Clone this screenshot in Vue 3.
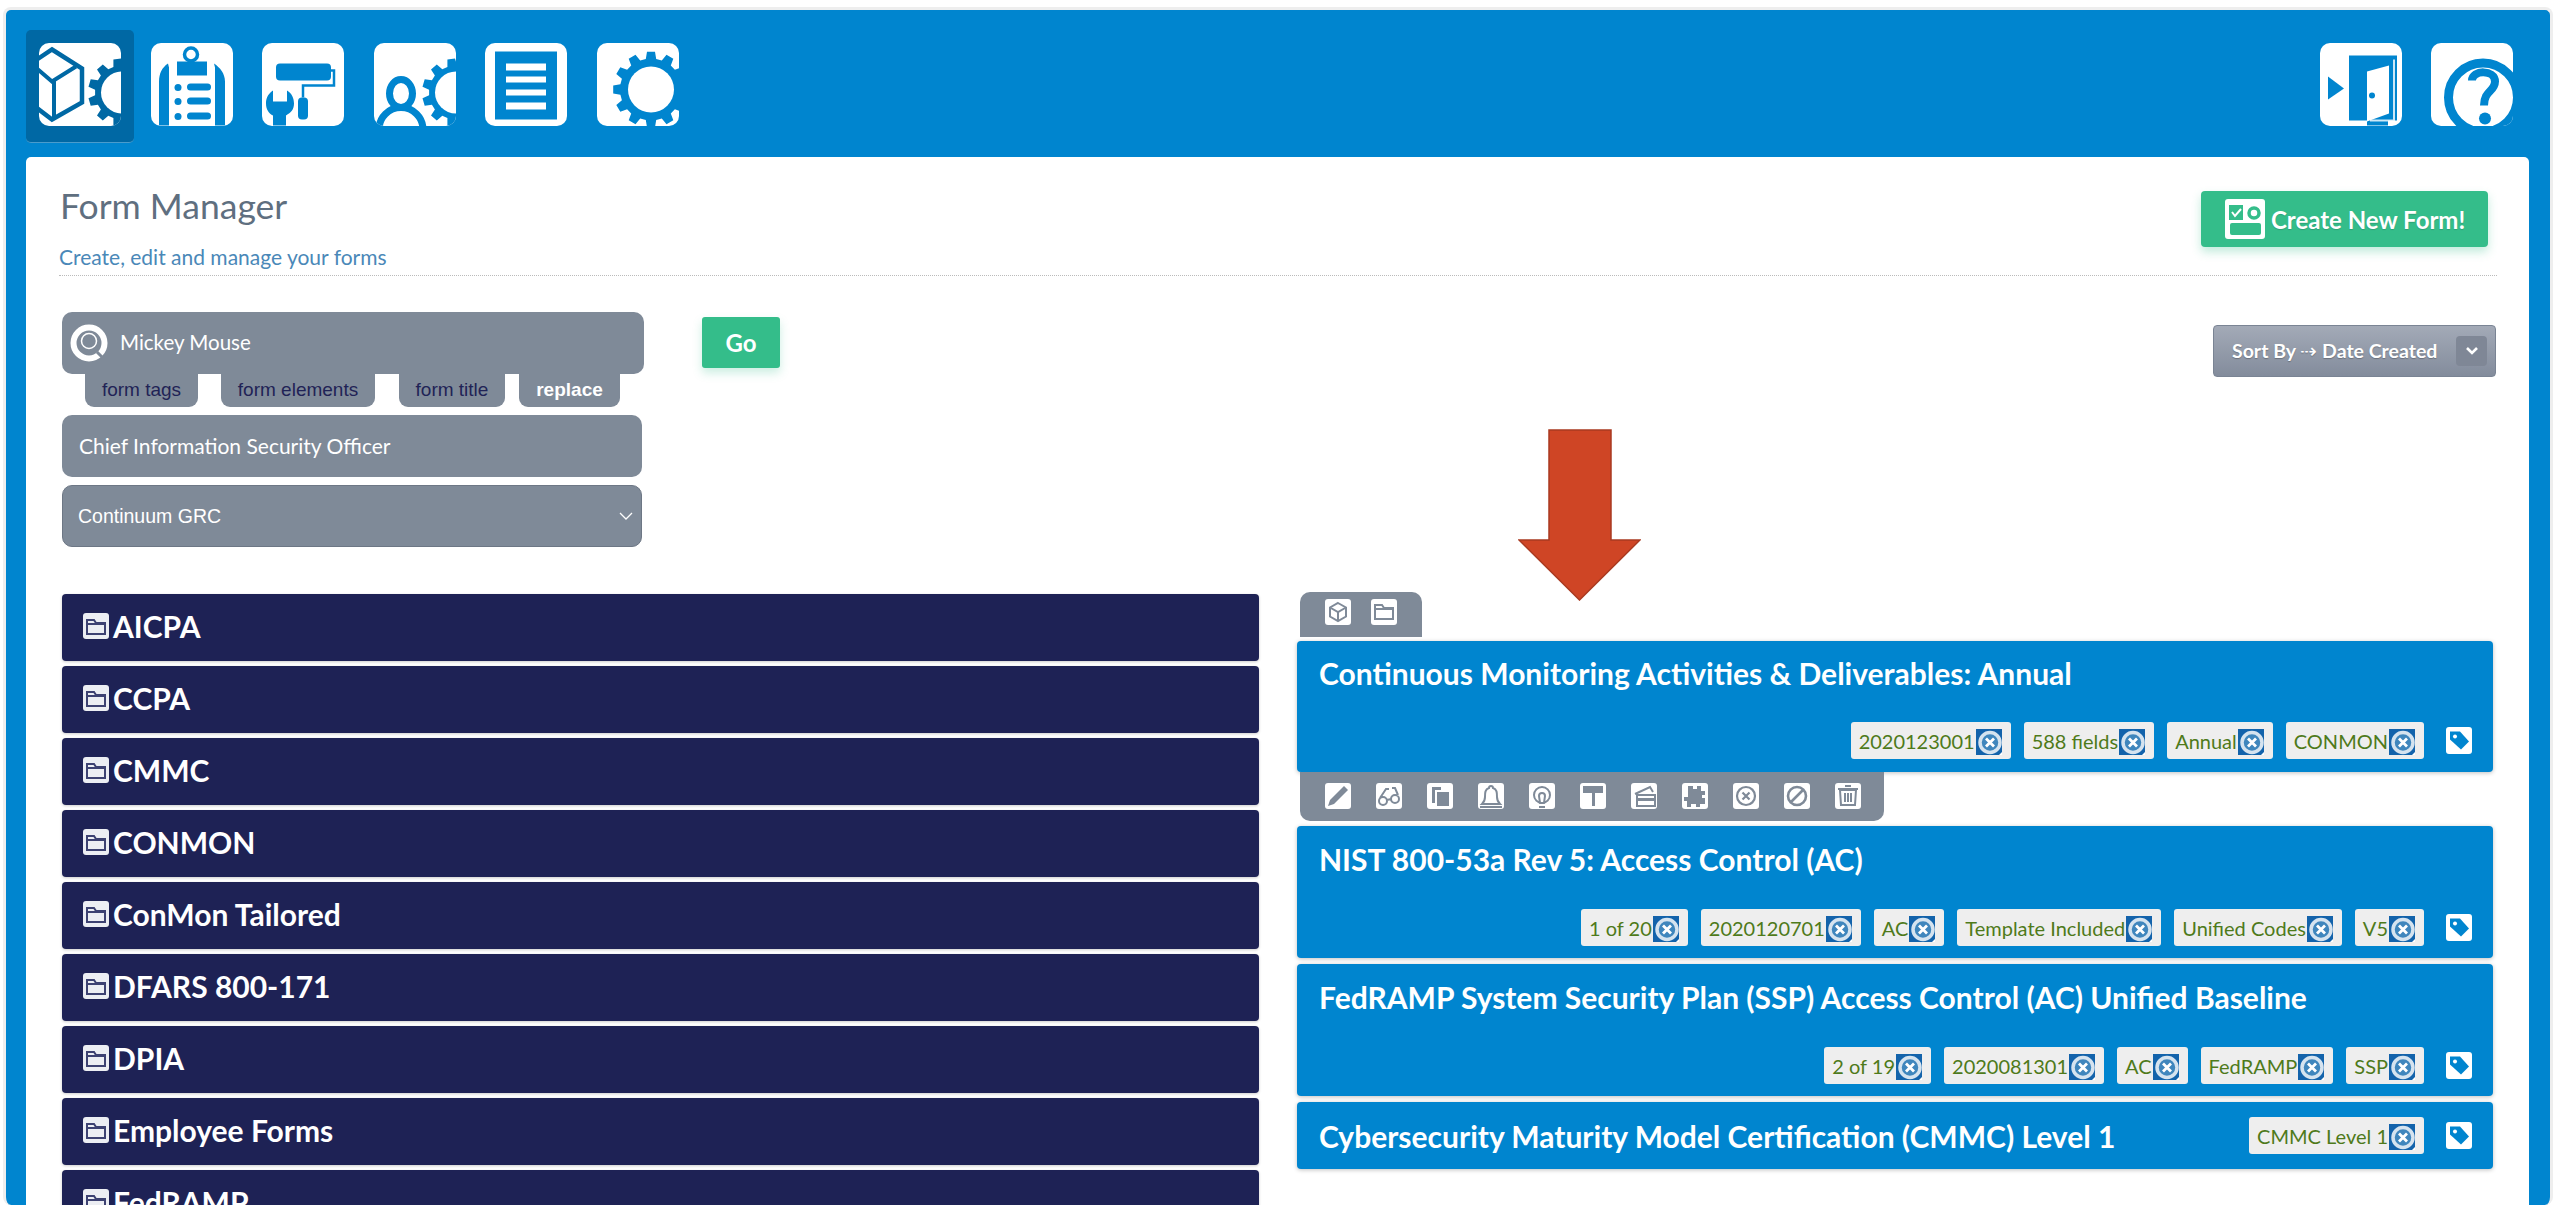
<template>
  <div class="page">
    <div class="frame">
      <header class="topbar">
        <nav class="nav">
          <a class="nav-btn active">
            <svg class="ico-lg" viewBox="0 0 82 82">
              <path d="M13 6 43 25V59L13 76-8 60V20Z" class="ln" stroke-width="4.5" />
              <path d="M-8 20 13 38 37 23M15 38V74" class="ln" stroke-width="4" />
              <path :d="gear(83, 49, 34, 27, 11)" class="fl" />
              <circle cx="83" cy="49" r="21" fill="#fff" />
            </svg>
          </a>
          <a class="nav-btn">
            <svg class="ico-lg" viewBox="0 0 82 82">
              <circle cx="40" cy="11" r="6.5" class="ln" stroke-width="3.5" />
              <rect x="26" y="18" width="30" height="14" class="fl" />
              <path d="M17 20C11 24 8 30 8 38V82H18V24ZM63 20C69 24 74 30 74 38V82H64V24Z" class="fl" />
              <g class="fl">
                <circle cx="27" cy="44" r="3.5" /><rect x="36" y="40" width="24" height="7" rx="3.5" />
                <circle cx="27" cy="58" r="3.5" /><rect x="36" y="54" width="24" height="7" rx="3.5" />
                <circle cx="27" cy="73" r="3.5" /><rect x="36" y="69" width="24" height="7" rx="3.5" />
              </g>
            </svg>
          </a>
          <a class="nav-btn">
            <svg class="ico-lg" viewBox="0 0 82 82">
              <rect x="14" y="20" width="55" height="17" rx="4" class="fl" />
              <path d="M69 27H72V42H41V54" class="ln" stroke-width="2.5" />
              <rect x="36" y="54" width="10" height="22" rx="4" class="fl" />
              <path d="M11 47C5 51 4 56 4 60 4 66 7 70 11 72V82H24V72C29 69 32 66 32 60 32 55 30 50 25 47V58H11Z" class="fl" />
            </svg>
          </a>
          <a class="nav-btn">
            <svg class="ico-lg" viewBox="0 0 82 82">
              <path :d="gear(82, 49, 34, 27, 11)" class="fl" />
              <circle cx="82" cy="49" r="21" fill="#fff" />
              <circle cx="27" cy="86" r="22" class="ln" stroke-width="7" />
              <ellipse cx="27" cy="50" rx="11.5" ry="14" fill="#fff" class="ln2" stroke-width="7" />
            </svg>
          </a>
          <a class="nav-btn">
            <svg class="ico-lg" viewBox="0 0 82 82">
              <rect x="10" y="8" width="62" height="68" class="fl" />
              <g fill="#fff">
                <rect x="21" y="20" width="40" height="7" /><rect x="21" y="33" width="40" height="6" />
                <rect x="21" y="46" width="40" height="6" /><rect x="21" y="59" width="40" height="7" />
              </g>
            </svg>
          </a>
          <a class="nav-btn">
            <svg class="ico-lg" viewBox="0 0 82 82">
              <path :d="gear(54, 46, 38, 31, 12)" class="fl" />
              <circle cx="54" cy="46" r="23" fill="#fff" />
            </svg>
          </a>
        </nav>
        <nav class="nav">
          <a class="nav-btn">
            <svg class="ico-lg" viewBox="0 0 82 82">
              <path d="M8 33 24 45 8 56Z" class="fl" />
              <path d="M29 12H77V77H68V82H47V77H29Z" class="fl" />
              <path d="M47 28 69 22V70L47 78Z" fill="#fff" />
              <path d="M73 16H75V78H50V76H73Z" fill="#fff" opacity=".8" />
              <circle cx="52" cy="52" r="3" class="fl" />
            </svg>
          </a>
          <a class="nav-btn">
            <svg class="ico-lg" viewBox="0 0 82 82">
              <circle cx="52" cy="54" r="34.5" class="ln" stroke-width="9" />
              <path d="M41 37C41 26 64 26 64 38 64 48 53 47 53 62" class="ln" stroke-width="8" />
              <circle cx="54" cy="75" r="6" class="fl" />
            </svg>
          </a>
        </nav>
      </header>

      <main class="panel">
        <div class="head">
          <div>
            <h1>Form Manager</h1>
            <p>Create, edit and manage your forms</p>
          </div>
          <button class="create">
            <svg class="create-ico" viewBox="0 0 40 40">
              <rect x="4" y="6" width="14" height="15" fill="#34bd8a" />
              <path d="M7 13l3 4 6-7" fill="none" stroke="#fff" stroke-width="2" />
              <circle cx="29" cy="14" r="5" fill="none" stroke="#34bd8a" stroke-width="3.5" />
              <rect x="5" y="24" width="31" height="12" rx="2" fill="#34bd8a" />
            </svg>
            <span>Create New Form!</span>
          </button>
        </div>

        <div class="tools">
          <div class="form-side">
            <div class="form-col">
              <div class="field search">
                <svg class="search-ico" viewBox="0 0 40 40">
                  <circle cx="19" cy="20" r="15.5" fill="none" stroke="#fff" stroke-width="6" />
                  <circle cx="19" cy="18" r="7.5" fill="none" stroke="#fff" stroke-width="1.5" />
                  <path d="M27 29l6 6" stroke="#7f8a98" stroke-width="3" />
                </svg>
                <span>Mickey Mouse</span>
              </div>
              <div class="tabs">
                <span v-for="t in searchTabs" :key="t.label" class="tab" :class="{ on: t.on }" :style="{ width: t.w + 'px', marginRight: t.gap + 'px' }">{{ t.label }}</span>
              </div>
              <div class="field plain">Chief Information Security Officer</div>
              <div class="field select">
                <span>Continuum GRC</span>
                <svg class="sel-chev" viewBox="0 0 14 9"><path d="M1 1l6 6 6-6" fill="none" stroke="#fff" stroke-width="1.3" /></svg>
              </div>
            </div>
            <button class="go">Go</button>
          </div>
          <div class="sort">
            <span>Sort By <em>⇢</em> Date Created</span>
            <i class="sort-chev"><svg viewBox="0 0 14 10" width="14" height="10"><path d="M2 2l5 5 5-5" fill="none" stroke="#fff" stroke-width="2.6" /></svg></i>
          </div>
        </div>

        <div class="columns">
          <div class="folders">
            <div v-for="f in folders" :key="f" class="folder">
              <svg class="folder-ico" viewBox="0 0 26 26">
                <path d="M4 7h7l2 3h9v11H4z M4 11h18" fill="none" stroke="#3d4272" stroke-width="2" />
              </svg>
              <span>{{ f }}</span>
            </div>
          </div>

          <div class="forms">
            <div class="strip top">
              <svg v-for="ic in topIcons" :key="ic.name" class="ico-sm" viewBox="0 0 26 26">
                <path v-for="(p, i) in ic.parts" :key="i" :d="p.d" :fill="p.fill ? '#7f8a98' : 'none'" :stroke="p.fill ? 'none' : '#7f8a98'" :stroke-width="p.w || 2" />
              </svg>
            </div>
            <template v-for="(c, idx) in cards" :key="c.title">
              <div class="card" :class="{ compact: c.compact, first: idx === 0 }">
                <h3>{{ c.title }}</h3>
                <div class="chips">
                  <span v-for="chip in c.chips" :key="chip" class="chip">
                    {{ chip }}
                    <svg class="x-ico" viewBox="0 0 26 26">
                      <rect width="26" height="26" fill="#1363ab" />
                      <circle cx="14" cy="13.500" r="10" fill="#3f86bd" stroke="#d5e3ef" stroke-width="3.500" />
                      <path d="M10 9.500l8 8M18 9.500l-8 8" stroke="#fff" stroke-width="2.800" />
                      <path d="M26 26h-3l3-3z" fill="#fff" />
                    </svg>
                  </span>
                  <svg class="tag-ico" viewBox="0 0 26 26">
                    <path d="M4 4h10l9 10-8 8-11-10z" fill="#0085cf" />
                    <circle cx="9" cy="9" r="2" fill="#fff" />
                  </svg>
                </div>
              </div>
              <div v-if="idx === 0" class="strip actions">
                <svg v-for="ic in actionIcons" :key="ic.name" class="ico-sm" viewBox="0 0 26 26">
                  <path v-for="(p, i) in ic.parts" :key="i" :d="p.d" :fill="p.fill ? '#7f8a98' : 'none'" :stroke="p.fill ? 'none' : '#7f8a98'" :stroke-width="p.w || 2" />
                </svg>
              </div>
            </template>
          </div>
        </div>
      </main>
    </div>

    <!-- annotation arrow sits over the page -->
    <svg class="arrow" viewBox="0 0 123 172">
      <path d="M31 1H93V111H122L61.5 171 1 111H31Z" fill="#cf4525" stroke="#a93a20" stroke-width="1.5" />
    </svg>
  </div>
</template>

<script setup>
function gear(cx, cy, R, r, n) {
  let d = ''
  const step = (Math.PI * 2) / n
  for (let i = 0; i < n; i++) {
    const a = i * step
    const pts = [
      [r, a - step * 0.32],
      [R, a - step * 0.2],
      [R, a + step * 0.2],
      [r, a + step * 0.32],
    ]
    for (const [rad, ang] of pts) {
      d += (d ? 'L' : 'M') + (cx + rad * Math.cos(ang)).toFixed(1) + ' ' + (cy + rad * Math.sin(ang)).toFixed(1)
    }
  }
  return d + 'Z'
}

const searchTabs = [
  { label: 'form tags', w: 113, gap: 23 },
  { label: 'form elements', w: 154, gap: 24 },
  { label: 'form title', w: 106, gap: 14 },
  { label: 'replace', w: 101, gap: 0, on: true },
]

const folders = ['AICPA', 'CCPA', 'CMMC', 'CONMON', 'ConMon Tailored', 'DFARS 800-171', 'DPIA', 'Employee Forms', 'FedRAMP']

const topIcons = [
  { name: 'cube', parts: [{ d: 'M13 4l8 4.5v9L13 22l-8-4.500v-9zM5 8.500l8 4.500 8-4.500M13 13v9' }] },
  { name: 'folder', parts: [{ d: 'M4 6h7l2 3h9v11H4zM4 10h18' }] },
]

const actionIcons = [
  { name: 'pencil', parts: [{ d: 'M19 3l4 4L9 21l-6 2 2-6z', fill: true }] },
  { name: 'glasses', parts: [{ d: 'M11 18a4 4 0 1 1-8 0 4 4 0 0 1 8 0zM23 16a4 4 0 1 1-8 0 4 4 0 0 1 8 0zM11 17l4-1M4 15l6-9h3M22 12l-3-7h-3' }] },
  { name: 'copy', parts: [{ d: 'M5 4h9v3H8v13H5z', fill: true }, { d: 'M10 9h12v14H10z', fill: true }] },
  { name: 'bell', parts: [{ d: 'M13 3a2 2 0 0 1 2 2c4 1 4 5 4 9 0 3 1 5 3 7H4c2-2 3-4 3-7 0-4 0-8 4-9a2 2 0 0 1 2-2z' }, { d: 'M2 24h22', w: 2 }] },
  { name: 'bulb', parts: [{ d: 'M21 12a8 8 0 1 1-16 0 8 8 0 0 1 16 0zM10 24h6M16 13a3 3 0 1 0-6 0l1 7h4z' }] },
  { name: 'roller', parts: [{ d: 'M3 3h20v7H3z', fill: true }, { d: 'M12 10h3v13h-3z', fill: true }] },
  { name: 'card', parts: [{ d: 'M4 11l15-7 3 5', w: 2 }, { d: 'M6 12h18v11H6zM3 12', w: 2 }, { d: 'M6 15h18v3H6z', fill: true }] },
  { name: 'puzzle', parts: [{ d: 'M6 3h5v3h4V3h4v5h4v4h-3v3h3v6h-5v3h-4v-3H9v3H5v-6H2v-4h4z', fill: true }] },
  { name: 'xcircle', parts: [{ d: 'M22 13a9 9 0 1 1-18 0 9 9 0 0 1 18 0zM9.500 9.500l7 7M16.500 9.500l-7 7', w: 2.200 }] },
  { name: 'ban', parts: [{ d: 'M22 13a9 9 0 1 1-18 0 9 9 0 0 1 18 0zM7 19L19 7', w: 2.600 }] },
  { name: 'trash', parts: [{ d: 'M5 7h16l-1 15H6zM3 6h20M10 3h6M10 10v9M13 10v9M16 10v9', w: 2 }] },
]

const cards = [
  { title: 'Continuous Monitoring Activities & Deliverables: Annual', chips: ['2020123001', '588 fields', 'Annual', 'CONMON'] },
  { title: 'NIST 800-53a Rev 5: Access Control (AC)', chips: ['1 of 20', '2020120701', 'AC', 'Template Included', 'Unified Codes', 'V5'] },
  { title: 'FedRAMP System Security Plan (SSP) Access Control (AC) Unified Baseline', chips: ['2 of 19', '2020081301', 'AC', 'FedRAMP', 'SSP'] },
  { title: 'Cybersecurity Maturity Model Certification (CMMC) Level 1', chips: ['CMMC Level 1'], compact: true },
]
</script>

<style scoped>
.page { position: relative; height: 1205px; overflow: hidden; background: #fff; font-family: "Lato", "Noto Sans", sans-serif; }
.frame { margin: 7px 7px 0 3px; height: 1198px; border: 3px solid #eee; border-bottom: 0; border-radius: 8px; background: #0085cf; box-sizing: border-box; }
.topbar { display: flex; justify-content: space-between; height: 147px; padding: 20px 24px 0 20px; box-sizing: border-box; }
.nav { display: flex; gap: 3.5px; align-items: flex-start; }
.nav-btn { display: block; width: 108px; height: 113px; padding: 13px; box-sizing: border-box; border-radius: 5px; color: #0085cf; }
.nav-btn.active { background: #0068a4; color: #0068a4; border-bottom: 1px solid #4a9ccc; }
.ico-lg { display: block; width: 82px; height: 83px; background: #fff; border-radius: 10px; overflow: hidden; }
.ln { fill: none; stroke: currentColor; }
.ln2 { stroke: currentColor; }
.fl { fill: currentColor; }

.panel { margin: 0 21px 0 20px; height: 1050px; background: #fff; border-radius: 5px 5px 0 0; overflow: hidden; }
.head { display: flex; justify-content: space-between; align-items: flex-start; height: 118px; margin: 0 32px 0 33px; border-bottom: 1px dotted #bbb; }
.head h1 { margin: 27px 0 0 1px; font-size: 35.5px; line-height: 44px; font-weight: 400; color: #5f6f80; }
.head p { margin: 16px 0 0; font-size: 21px; line-height: 26px; color: #4a88b8; }
.create { display: flex; align-items: center; gap: 6px; margin: 34px 9px 0 0; width: 287px; height: 56px; padding: 0 0 0 24px; border: 0; border-radius: 4px; background: #34bd8a; color: #fff; font-family: inherit; font-size: 24px; font-weight: 700; text-shadow: 0 1px 1px rgba(0, 0, 0, .15); box-shadow: 0 5px 10px rgba(52, 189, 138, .3); box-sizing: border-box; }
.create-ico { width: 40px; height: 40px; background: #fff; border-radius: 3px; flex: none; }

.tools { display: flex; justify-content: space-between; align-items: flex-start; margin: 36px 33px 0 36px; }
.form-side { display: flex; align-items: flex-start; gap: 58px; }
.form-col { width: 582px; }
.field { display: flex; align-items: center; height: 62px; box-sizing: border-box; background: #7f8a98; color: #fff; font-size: 21px; border-radius: 10px; }
.search { padding-left: 8px; gap: 10px; font-size: 20.500px; }
.search span { margin-top: -2px; }
.search-ico { width: 40px; height: 40px; }
.plain { width: 580px; margin-top: 8px; padding: 0 0 2px 17px; }
.select { width: 580px; margin-top: 8px; padding: 0 8px 0 15px; justify-content: space-between; font-family: "Liberation Sans", sans-serif; font-size: 19.500px; border: 1px solid #6d7785; }
.sel-chev { width: 14px; height: 9px; }
.tabs { display: flex; margin-left: 23px; height: 33px; }
.tab { display: flex; justify-content: center; align-items: center; height: 33px; padding-bottom: 2px; box-sizing: border-box; background: #7f8a98; border-radius: 0 0 9px 9px; color: #1f2356; font-family: "Liberation Sans", sans-serif; font-size: 19px; }
.tab.on { color: #fff; font-weight: 700; }
.go { margin-top: 5px; width: 78px; height: 51px; border: 0; border-radius: 3px; background: #34bd8a; color: #fff; font-family: inherit; font-size: 24px; font-weight: 700; box-shadow: 0 5px 10px rgba(52, 189, 138, .25); }
.sort { display: flex; justify-content: space-between; align-items: center; margin: 13px 0 0; width: 283px; height: 52px; padding: 0 8px 0 18px; box-sizing: border-box; border: 1px solid #7a8494; border-radius: 4px; background: linear-gradient(#a3aab7, #838c9c); color: #fff; font-size: 19.500px; font-weight: 700; text-shadow: 0 1px 1px rgba(0, 0, 0, .25); }
.sort em { font-style: normal; font-weight: 400; }
.sort-chev { display: flex; justify-content: center; align-items: center; width: 31px; height: 30px; border-radius: 4px; background: #7f8796; }

.columns { display: flex; gap: 38px; margin: 45px 36px 0; }
.folders { width: 1197px; padding-top: 2px; flex: none; display: flex; flex-direction: column; gap: 5px; }
.folder { display: flex; align-items: center; gap: 4px; height: 67px; padding-left: 21px; background: #1e2255; border-radius: 4px; color: #fff; font-size: 30px; font-weight: 700; box-shadow: 0 1px 3px rgba(0, 0, 0, .2); }
.folder span { margin-top: -3px; }
.folder-ico { width: 26px; height: 26px; background: #eceef3; border-radius: 3px; flex: none; margin-top: -4px; }

.forms { flex: 1; }
.strip { margin-left: 3px; display: flex; background: #7f8a98; box-sizing: border-box; }
.strip.top { width: 122px; height: 45px; padding: 7px 0 0 25px; gap: 20px; border-radius: 10px 10px 0 0; margin-bottom: 4px; }
.strip.actions { width: 584px; height: 49px; padding: 11px 0 0 25px; gap: 25px; border-radius: 0 0 10px 10px; margin-bottom: 5px; }
.ico-sm { width: 26px; height: 26px; background: #fff; border-radius: 3px; flex: none; }
.card { height: 132px; margin-bottom: 6px; background: #0085cf; border-radius: 4px; box-shadow: 0 1px 4px rgba(0, 0, 0, .25); color: #fff; padding: 13px 21px 0 22px; box-sizing: border-box; }
.card.first { height: 131px; margin-bottom: 0; padding-top: 12px; }
.card h3 { margin: 0; font-size: 30px; line-height: 40px; font-weight: 700; }
.chips { display: flex; justify-content: flex-end; align-items: center; gap: 13px; margin-top: 30px; }
.card.first .chips { margin-top: 29px; }
.card.compact { height: 67px; display: flex; justify-content: space-between; align-items: center; padding-top: 0; }
.card.compact .chips { margin-top: 0; }
.chip { display: flex; align-items: center; gap: 1px; height: 37px; padding: 0 9px 0 8px; background: #eee; border-radius: 3px; color: #4e7a1a; font-size: 20px; }
.x-ico { width: 26px; height: 26px; flex: none; margin-top: 3px; }
.tag-ico { width: 26px; height: 27px; background: #fff; border-radius: 3px; margin-left: 9px; flex: none; }

.arrow { position: absolute; left: 1518px; top: 429px; width: 123px; height: 172px; }
</style>

<style>
html, body { margin: 0; overflow: hidden; }
</style>
